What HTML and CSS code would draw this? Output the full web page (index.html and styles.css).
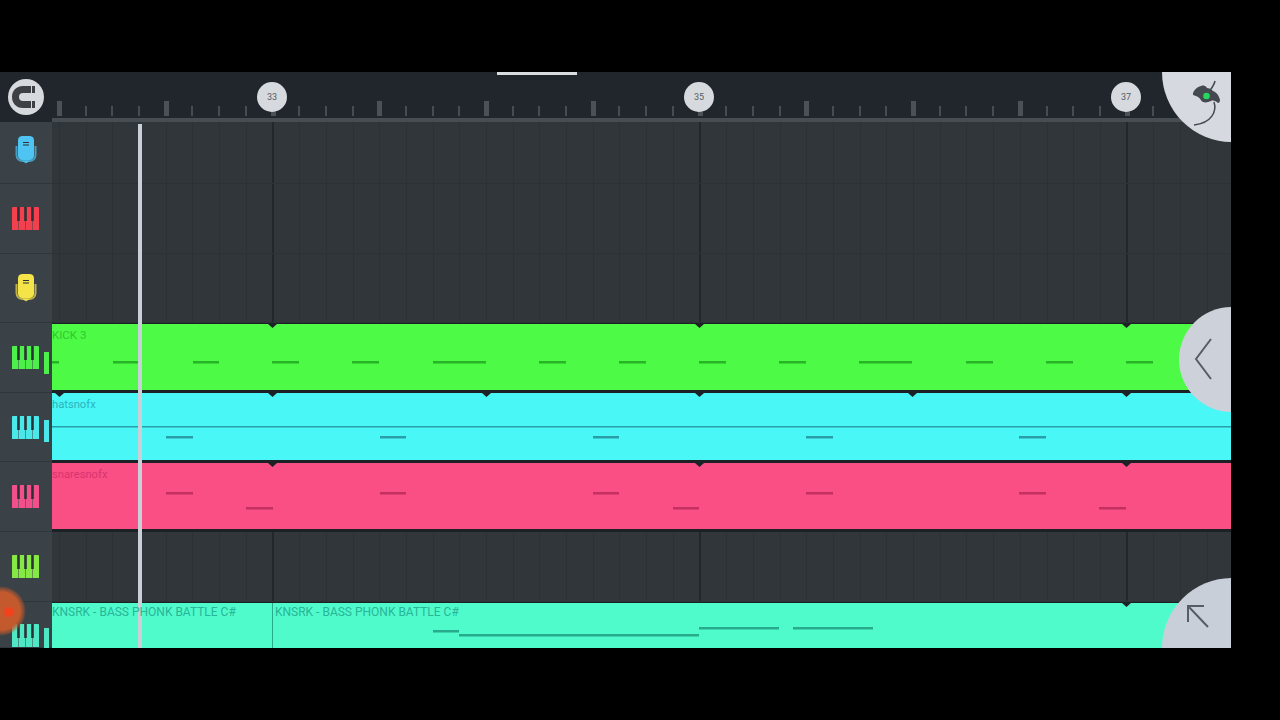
FILE: index.html
```html
<!DOCTYPE html>
<html lang="en">
<head>
  <meta charset="UTF-8">
  <meta name="viewport" content="width=device-width, initial-scale=1">
  <title>Playlist</title>
  <link rel="stylesheet" href="styles.css">
</head>
<body>

  <svg class="defs" width="0" height="0">
    <symbol id="piano" viewBox="0 0 28 23">
      <path fill="currentColor" d="M0 1a1 1 0 0 1 1-1h5.500v23H0zM7 0h6.500v23H7zM14 0h6.500v23H14zM21 0h5a1 1 0 0 1 1 1v22h-6z"/>
      <path fill="#2b3136" d="M5.200 0h2.600v14H5.200zM12.200 0h2.600v14h-2.600zM19.200 0h2.600v14h-2.600z"/>
    </symbol>
    <symbol id="mic" viewBox="0 0 22 28">
      <path fill="none" stroke="currentColor" stroke-opacity=".7" stroke-width="2" d="M1.500 10v9c0 4 3 6 6 6h7c3 0 6-2 6-6v-9"/>
      <path fill="currentColor" stroke="currentColor" stroke-opacity=".7" stroke-width="1" d="M11 27l-3-2h6z"/>
      <path fill="currentColor" d="M7 0h8a4.500 4.500 0 0 1 4 4.500V20c0 2-2 4-4 4H7c-2 0-4-2-4-4V4.500A4.500 4.500 0 0 1 7 0z"/>
      <path fill="#2b3136" d="M8 6h6v1H8zM8 8.500h6v1H8z"/>
    </symbol>
  </svg>

  <div class="app">
    <!-- Top row -->
    <div class="corner">
      <div class="magnet">
        <svg width="24" height="22" viewBox="0 0 24 22">
          <path fill="#3d4145" d="M11 0h8v7h-8a4 4 0 0 0 0 8h8v7h-8C4 22 0 17 0 11S4 0 11 0z"/>
          <path fill="#3d4145" d="M20 0h3v7h-3zM20 15h3v7h-3z"/>
        </svg>
      </div>
    </div>
    <div class="ruler">
      <div class="ticks"></div>
      <div class="ruler-line"></div>
    </div>

    <!-- Tracks -->
    <div class="side"><svg class="mic mic-blue"><use href="#mic"/></svg></div>
    <div class="lane"></div>

    <div class="side"><svg class="piano piano-red"><use href="#piano"/></svg></div>
    <div class="lane"></div>

    <div class="side"><svg class="mic mic-yellow"><use href="#mic"/></svg></div>
    <div class="lane"></div>

    <div class="side"><svg class="piano piano-green"><use href="#piano"/></svg><span class="level level-green"></span></div>
    <div class="lane lane-clip">
      <div class="clip clip-green">
        <span class="clip-name">KICK 3</span>
        <svg class="notes" viewBox="52 324 1179 66" width="1179" height="66">
          <path class="mark" d="M268 324h9l-4.500 4zM695 324h9l-4.500 4zM1122 324h9l-4.500 4z"/>
          <rect x="52" y="361" width="7" height="2"/><rect x="113" y="361" width="27" height="2"/>
          <rect x="193" y="361" width="26" height="2"/><rect x="272" y="361" width="27" height="2"/>
          <rect x="352" y="361" width="27" height="2"/><rect x="433" y="361" width="53" height="2"/>
          <rect x="539" y="361" width="27" height="2"/><rect x="619" y="361" width="27" height="2"/>
          <rect x="699" y="361" width="27" height="2"/><rect x="779" y="361" width="27" height="2"/>
          <rect x="859" y="361" width="53" height="2"/><rect x="966" y="361" width="27" height="2"/>
          <rect x="1046" y="361" width="27" height="2"/><rect x="1126" y="361" width="27" height="2"/>
        </svg>
      </div>
    </div>

    <div class="side"><svg class="piano piano-cyan"><use href="#piano"/></svg><span class="level level-cyan"></span></div>
    <div class="lane lane-clip">
      <div class="clip clip-cyan">
        <span class="clip-name clip-lower">hatsnofx</span>
        <svg class="notes" viewBox="52 393 1179 67" width="1179" height="67">
          <path class="mark" d="M55 393h9l-4.500 4zM268 393h9l-4.500 4zM482 393h9l-4.500 4zM695 393h9l-4.500 4zM908 393h9l-4.500 4zM1122 393h9l-4.500 4z"/>
          <rect class="long-line" x="52" y="426" width="1179" height="1"/>
          <rect x="166" y="436" width="27" height="2"/><rect x="380" y="436" width="26" height="2"/>
          <rect x="593" y="436" width="26" height="2"/><rect x="806" y="436" width="27" height="2"/>
          <rect x="1019" y="436" width="27" height="2"/>
        </svg>
      </div>
    </div>

    <div class="side"><svg class="piano piano-pink"><use href="#piano"/></svg></div>
    <div class="lane lane-clip">
      <div class="clip clip-pink">
        <span class="clip-name clip-lower">snaresnofx</span>
        <svg class="notes" viewBox="52 463 1179 66" width="1179" height="66">
          <path class="mark" d="M268 463h9l-4.500 4zM695 463h9l-4.500 4zM1122 463h9l-4.500 4z"/>
          <rect x="166" y="492" width="27" height="2"/><rect x="380" y="492" width="26" height="2"/>
          <rect x="593" y="492" width="26" height="2"/><rect x="806" y="492" width="27" height="2"/>
          <rect x="1019" y="492" width="27" height="2"/>
          <rect x="246" y="507" width="27" height="2"/><rect x="673" y="507" width="26" height="2"/>
          <rect x="1099" y="507" width="27" height="2"/>
        </svg>
      </div>
    </div>

    <div class="side"><svg class="piano piano-lime"><use href="#piano"/></svg></div>
    <div class="lane"></div>

    <div class="side side-last"><svg class="piano piano-teal"><use href="#piano"/></svg><span class="level level-teal"></span></div>
    <div class="lane lane-clip">
      <div class="clip clip-teal">
        <span class="clip-name clip-bass">KNSRK - BASS PHONK BATTLE C#</span>
        <span class="clip-name clip-bass clip-second">KNSRK - BASS PHONK BATTLE C#</span>
        <svg class="notes" viewBox="52 603 1179 45" width="1179" height="45">
          <path class="mark" d="M1122 603h9l-4.500 4z"/>
          <rect class="long-line" x="272" y="603" width="1" height="45"/>
          <rect x="433" y="630" width="26" height="2"/><rect x="459" y="634" width="240" height="2"/>
          <rect x="699" y="627" width="80" height="2"/><rect x="793" y="627" width="80" height="2"/>
        </svg>
      </div>
    </div>

    <!-- Over the tracks -->
    <div class="scroll-thumb"></div>
    <div class="bar-num bar-33">33</div>
    <div class="bar-num bar-35">35</div>
    <div class="bar-num bar-37">37</div>
    <div class="playhead"></div>
    <div class="touch"></div>

    <div class="fab fab-top">
      <svg width="36" height="50" viewBox="0 0 36 50">
        <path fill="#43494f" d="M2 13c1-3 4-6 8-7 3-1 5 0 6 2 2 0 4 1 6 3 3 1 6 4 7 9 0 2-1 3-2 3-2-2-5-3-7-2-3 1-5 2-8 1-2-1-3-4-5-5-2-1-4-2-5-2z"/>
        <path fill="none" stroke="#43494f" stroke-width="1.500" d="M24 1c-1 5-5 9-8 14M23 22c3 9-2 21-20 23"/>
        <circle cx="15.500" cy="16" r="3.300" fill="#25d85a"/>
      </svg>
    </div>
    <div class="fab fab-mid">
      <svg width="20" height="44" viewBox="0 0 20 44"><path fill="none" stroke="#565d67" stroke-width="2" d="M18 2 3 22l15 20"/></svg>
    </div>
    <div class="fab fab-bottom">
      <svg width="26" height="26" viewBox="0 0 26 26"><path fill="none" stroke="#565d67" stroke-width="2" d="M3 19V3h16M3 3l20 21"/></svg>
    </div>
  </div>

</body>
</html>
```

FILE: styles.css
```css
* { margin: 0; padding: 0; box-sizing: border-box; }
body { background: #000; height: 720px; padding-top: 72px; overflow: hidden; font-family: Roboto, "Liberation Sans", sans-serif; }
.defs { display: block; position: absolute; }

.app { position: relative; width: 1231px; height: 576px; overflow: hidden; display: grid; grid-template-columns: 52px 1fr; grid-template-rows: 50px 62px 70px 69px 70px 69px 70px 70px 46px; background: #30363a; }

/* Top row */
.corner { background: #20262b; display: flex; padding: 7px 0 0 8px; }
.magnet { width: 36px; height: 36px; border-radius: 50%; background: #d6d9dd; display: flex; align-items: center; padding-left: 4px; }
.ruler { background: #20262b; display: flex; flex-direction: column; justify-content: flex-end; }
.ticks { height: 15px; background-repeat: no-repeat; background-position: bottom;
  background-image:
    repeating-linear-gradient(90deg, #4b5157 5px, #4b5157 10px, transparent 10px, transparent 111.75px),
    repeating-linear-gradient(90deg, #464c52 6px, #464c52 8px, transparent 8px, transparent 32.69px);
  background-size: 100% 15px, 100% 10px; margin-bottom: 2px; }
.ruler-line { height: 4px; background: #474e53; }

/* Track heads */
.side { background: #3a4147; border-bottom: 1px solid #30363b; display: flex; align-items: center; padding-left: 12px; position: relative; }
.side-last { align-items: flex-end; }
.piano { width: 28px; height: 23px; }
.piano-red { color: #f2404f; }
.piano-green { color: #4df04a; }
.piano-cyan { color: #4ae8e8; }
.piano-pink { color: #f2508a; }
.piano-lime { color: #86e844; }
.piano-teal { color: #4fe8c4; }
.level { position: absolute; left: 44px; top: 29px; width: 5px; height: 22px; }
.level-green { background: #4df04a; }
.level-cyan { background: #4ae8e8; top: 27px; }
.level-teal { background: #4fe8c4; top: 26px; height: 20px; }
.mic { width: 22px; height: 28px; margin-left: 3px; }
.mic-blue { color: #4fc4f2; margin-bottom: 6px; }
.mic-yellow { color: #f5e34a; }

/* Lanes */
.lane { position: relative; border-bottom: 1px solid #2c3135;
  background-image:
    repeating-linear-gradient(90deg, #22272b 220px, #22272b 222px, transparent 222px, transparent 647px),
    repeating-linear-gradient(90deg, #2c3135 7px, #2c3135 8px, transparent 8px, transparent 33.69px); }
.lane-clip { border-bottom: 0; background: #1c2125; }
.clip { position: absolute; left: 0; right: 0; top: 1px; bottom: 3px; overflow: hidden; }
.clip-green { background: #4dfa45; fill: #27b427; color: #30c832; }
.clip-cyan { background: #4af7f7; fill: #2a9ea8; color: #2ab4bc; top: 0; bottom: 2px; }
.clip-pink { background: #f94f85; fill: #c4305f; color: #d8356f; }
.clip-teal { background: #4ffbcb; fill: #27ab8c; color: #2ab498; bottom: 0; }
.clip-name { position: absolute; left: 0; top: 4px; font-size: 11.500px; line-height: 14px; white-space: nowrap; z-index: 1; }
.clip-lower { font-size: 11.200px; top: 5px; }
.clip-bass { font-size: 12px; top: 2px; }
.clip-second { left: 223px; }
.notes { position: absolute; left: 0; top: 0; display: block; }
.notes rect { height: 2.500px; }
.notes .long-line { height: 1.500px; }
.clip-teal .long-line { height: 45px; width: 1px; }
.mark { fill: #1c2226; }

/* Over the tracks */
.scroll-thumb { position: absolute; left: 497px; top: 0; width: 80px; height: 3px; background: #d9dde0; }
.bar-num { position: absolute; top: 10px; width: 30px; height: 30px; margin-left: -15px; border-radius: 50%; background: #d6dadf; color: #555b62; font-size: 9px; display: flex; align-items: center; justify-content: center; }
.bar-33 { left: 272px; }
.bar-35 { left: 699px; }
.bar-37 { left: 1126px; }
.playhead { position: absolute; left: 138px; top: 52px; bottom: 0; width: 4px; background: #c9d0d8; }
.touch { position: absolute; left: -24px; top: 514px; width: 50px; height: 50px; border-radius: 50%;
  background:
    radial-gradient(circle at 33px 26px, #f5401c 0, #f5401c 3.500px, rgba(245,64,28,0) 6px),
    radial-gradient(circle, #c4592d 0, #c25a2e 19px, rgba(190,90,45,.45) 23px, rgba(190,90,45,0) 25px); }

.fab { position: absolute; border-radius: 50%; display: flex; }
.fab-top { left: 1162px; top: -70px; width: 140px; height: 140px; background: #d6dae0; padding: 78px 0 0 29px; }
.fab-mid { left: 1179px; top: 235px; width: 105px; height: 105px; background: #ccd1da; padding: 30px 0 0 14px; }
.fab-bottom { left: 1162px; top: 506px; width: 140px; height: 140px; background: #c9cfd9; padding: 25px 0 0 23px; }
```
